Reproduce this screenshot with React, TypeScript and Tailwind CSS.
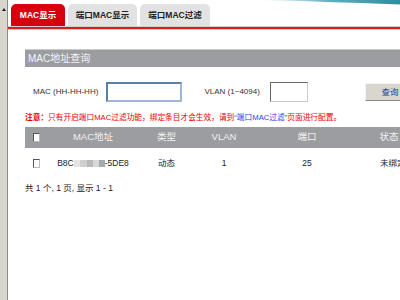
import React from "react";

const font = { fontFamily: '"Liberation Sans", "Noto Sans CJK SC", sans-serif' };

function Tab({ label, active, w }: { label: string; active?: boolean; w: string }) {
  return (
    <div
      className={`${w} h-[22px] rounded-t-[5px] flex items-center justify-center text-[8.5px] font-bold ${
        active ? "bg-[#d7000f] text-white" : "bg-[#e2e2e2] text-[#222]"
      }`}
    >
      {label}
    </div>
  );
}

function Check() {
  return <div className="w-[7px] h-[9px] border border-[#555] bg-white border-r-[#bbb] border-b-[#bbb]" />;
}

export default function App() {
  const cols = "grid grid-cols-[23px_90px_57px_58px_108px_56px]";
  return (
    <div className="relative w-[400px] h-[300px] overflow-hidden bg-white flex" style={font}>
      {/* left scrollbar */}
      <div className="w-[8px] h-full bg-[#d8d5cd] border-r border-[#8a8a8a] flex flex-col items-center pt-[8px] shrink-0">
        <div className="w-0 h-0 border-l-[2px] border-r-[2px] border-b-[3px] border-l-transparent border-r-transparent border-b-[#222]" />
      </div>

      {/* teal swoosh */}
      <svg className="absolute top-0 right-0" width="140" height="6" viewBox="0 0 140 6">
        <defs>
          <linearGradient id="sw" x1="0" y1="0" x2="1" y2="0">
            <stop offset="0" stopColor="#ffffff" />
            <stop offset="0.5" stopColor="#5fb0bc" />
            <stop offset="1" stopColor="#2a8f9f" />
          </linearGradient>
        </defs>
        <path d="M0,0 Q60,1.5 140,4.5 L140,0 Z" fill="url(#sw)" />
      </svg>

      <div className="flex-1 flex flex-col min-w-0">
        {/* tabs */}
        <div className="h-[26px] flex items-end gap-[3px] pl-[3px]">
          <Tab label="MAC显示" active w="w-[54px]" />
          <Tab label="端口MAC显示" w="w-[69px]" />
          <Tab label="端口MAC过滤" w="w-[70px]" />
        </div>
        <div className="h-[4px] border-t border-[#cfcfcf] bg-[#e01a1a] border-b border-b-[#f3c0c0]" />

        <div className="ml-[17px] mt-[19px] w-[400px]">
          {/* section header */}
          <div className="h-[18px] bg-[#9b9da0] border-t border-[#c9cacc] flex items-center pl-[3px] text-[10px] text-[#f4f4f4]">
            MAC地址查询
          </div>

          {/* query row */}
          <div className="mt-[15px] h-[20px] flex items-center text-[8px] text-[#333]">
            <span className="ml-[8px] w-[74px]">MAC (HH-HH-HH)</span>
            <div className="w-[76px] h-[20px] border-2 border-[#5a7fa8] border-r-[#9db8d4] border-b-[#9db8d4] bg-white" />
            <span className="ml-[23px] w-[66px]">VLAN (1~4094)</span>
            <div className="w-[39px] h-[20px] border border-[#666] border-r-[#ccc] border-b-[#ccc] bg-white" />
            <div className="ml-[57px] w-[60px] h-[18px] bg-[#d9d6cf] border border-[#f4f4f4] border-r-[#8a8a8a] border-b-[#8a8a8a] flex items-center pl-[15px] text-[#1f3f9a] text-[8.5px]">
              查询
            </div>
          </div>

          {/* note */}
          <div className="mt-[11px] h-[10px] flex items-center text-[7.7px] text-[#ee0000] whitespace-nowrap">
            <span className="font-bold">注意：</span>
            <span>只有开启端口MAC过滤功能，绑定条目才会生效，请到</span>
            <span className="text-[#3a3ae0]">“端口MAC过滤”</span>
            <span>页面进行配置。</span>
          </div>

          {/* table header */}
          <div className={`mt-[4px] h-[21px] bg-[#9b9da0] items-center text-[9.5px] text-[#f2f2f2] ${cols}`}>
            <div className="flex justify-center"><Check /></div>
            <div className="text-center">MAC地址</div>
            <div className="text-center">类型</div>
            <div className="text-center">VLAN</div>
            <div className="text-center">端口</div>
            <div className="text-center">状态</div>
          </div>

          {/* row */}
          <div className={`h-[30px] items-center text-[8.5px] text-[#222] ${cols}`}>
            <div className="flex justify-center"><Check /></div>
            <div className="flex justify-center items-center">
              <span>B8C</span>
              <span className="inline-block w-[6px] h-[7px] bg-[#e4e4e4]" />
              <span className="inline-block w-[7px] h-[7px] bg-[#d0d0d0]" />
              <span className="inline-block w-[6px] h-[7px] bg-[#b9b9b9]" />
              <span className="inline-block w-[6px] h-[7px] bg-[#d8d8d8]" />
              <span className="inline-block w-[6px] h-[7px] bg-[#a8a8a8]" />
              <span>-5DE8</span>
            </div>
            <div className="text-center">动态</div>
            <div className="text-center">1</div>
            <div className="text-center">25</div>
            <div className="text-left pl-[19px] whitespace-nowrap">未绑定</div>
          </div>

          {/* footer */}
          <div className="mt-[5px] h-[10px] flex items-center text-[8.5px] text-[#222] whitespace-nowrap">
            共 1 个, 1 页, 显示 1 - 1
          </div>
        </div>
      </div>
    </div>
  );
}
